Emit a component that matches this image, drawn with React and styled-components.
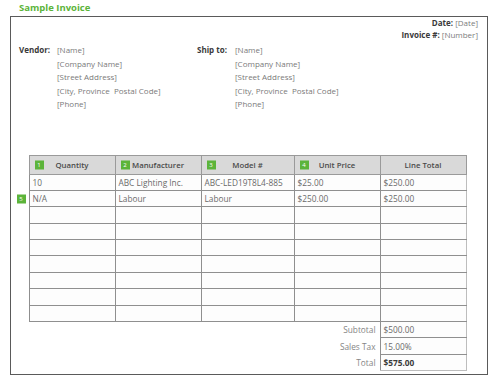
import React from "react";
import styled, { createGlobalStyle } from "styled-components";

const GlobalStyle = createGlobalStyle`
  body {
    margin: 0;
    background: #fff;
    font-family: "Open Sans", "Liberation Sans", sans-serif;
  }
`;

const Page = styled.div`
  width: 500px;
  height: 386px;
  padding-top: 2px;
  box-sizing: border-box;
`;

const Title = styled.h1`
  margin: 0 0 0 19px;
  font-size: 9.5px;
  line-height: 12px;
  font-weight: 700;
  color: #5cb43a;
`;

const Sheet = styled.div`
  margin: 2px 12px 0 10px;
  height: 359px;
  border: 1.5px solid #5a5a5a;
  box-sizing: border-box;
  padding: 1px 9px 0 8px;
  display: flex;
  flex-direction: column;
`;

const MetaBlock = styled.div`
  display: flex;
  flex-direction: column;
  align-items: flex-end;
  gap: 1px;
`;

const MetaLine = styled.div`
  font-size: 8px;
  line-height: 10.5px;
  color: #7d7d7d;
`;

const Label = styled.span`
  font-weight: 700;
  color: #3a3a3a;
`;

const Parties = styled.div`
  display: flex;
  margin-top: 3px;
`;

const Party = styled.div`
  display: grid;
  grid-template-columns: 38px auto;
  width: ${p => p.width}px;
`;

const PartyLabel = styled.div`
  font-size: 8px;
  line-height: 13.5px;
  font-weight: 700;
  color: #3a3a3a;
`;

const PartyLines = styled.div`
  display: flex;
  flex-direction: column;
`;

const PartyLine = styled.div`
  font-size: 8px;
  line-height: 13.5px;
  color: #7a7a7a;
`;

const Table = styled.table`
  margin: 44px 0 0 9.5px;
  border-collapse: collapse;
  width: 437px;
  table-layout: fixed;
  font-size: 8.3px;
  color: #6a6a6a;
`;

const Head = styled.th`
  position: relative;
  height: 18px;
  padding: 0;
  background: #d9d9d9;
  border: 1px solid #9a9a9a;
  font-size: 7.8px;
  font-weight: 600;
  color: #4a4a4a;
  text-align: center;
`;

const Badge = styled.span`
  position: absolute;
  left: ${p => p.left ?? 5}px;
  top: 50%;
  transform: translateY(-50%);
  width: 9px;
  height: 9px;
  background: #5cb43a;
  color: #fff;
  font-size: 6px;
  line-height: 9px;
  font-weight: 400;
  text-align: center;
`;

const Row = styled.tr`
  height: 16.4px;
`;

const Cell = styled.td`
  position: relative;
  padding: 0 0 0 3px;
  border: 1px solid #8f8f8f;
  border-right: ${p => (p.last ? "1.5px solid #bdbdbd" : "1px solid #8f8f8f")};
  border-bottom: ${p => (p.end ? "1.5px solid #bdbdbd" : "1px solid #8f8f8f")};
  background: #fdfdfd;
  white-space: nowrap;
  font-weight: ${p => (p.bold ? 700 : 400)};
  color: ${p => (p.bold ? "#3a3a3a" : "#6a6a6a")};
`;

const SumLabel = styled.td`
  padding: 0 4px 0 0;
  text-align: right;
  color: #858585;
  border: none;
`;

const cols = [86, 86, 93, 86, 86];

const heads = [
  { n: "1", t: "Quantity" },
  { n: "2", t: "Manufacturer" },
  { n: "3", t: "Model #" },
  { n: "4", t: "Unit Price" },
  { n: null, t: "Line Total" },
];

const rows = [
  ["10", "ABC Lighting Inc.", "ABC-LED19T8L4-885", "$25.00", "$250.00"],
  ["N/A", "Labour", "Labour", "$250.00", "$250.00"],
  ...Array.from({ length: 7 }, () => ["", "", "", "", ""]),
];

const totals = [
  ["Subtotal", "$500.00"],
  ["Sales Tax", "15.00%"],
  ["Total", "$575.00", true],
];

export default function App() {
  return (
    <Page>
      <GlobalStyle />
      <Title>Sample Invoice</Title>
      <Sheet>
        <MetaBlock>
          <MetaLine><Label>Date:</Label> [Date]</MetaLine>
          <MetaLine><Label>Invoice #:</Label> [Number]</MetaLine>
        </MetaBlock>
        <Parties>
          <Party width={178}>
            <PartyLabel>Vendor:</PartyLabel>
            <PartyLines>
              <PartyLine>[Name]</PartyLine>
              <PartyLine>[Company Name]</PartyLine>
              <PartyLine>[Street Address]</PartyLine>
              <PartyLine>[City, Province&nbsp;&nbsp;Postal Code]</PartyLine>
              <PartyLine>[Phone]</PartyLine>
            </PartyLines>
          </Party>
          <Party width={200}>
            <PartyLabel>Ship to:</PartyLabel>
            <PartyLines>
              <PartyLine>[Name]</PartyLine>
              <PartyLine>[Company Name]</PartyLine>
              <PartyLine>[Street Address]</PartyLine>
              <PartyLine>[City, Province&nbsp;&nbsp;Postal Code]</PartyLine>
              <PartyLine>[Phone]</PartyLine>
            </PartyLines>
          </Party>
        </Parties>
        <Table>
          <colgroup>
            {cols.map((w, i) => <col key={i} style={{ width: w }} />)}
          </colgroup>
          <thead>
            <tr>
              {heads.map(h => (
                <Head key={h.t}>
                  {h.n && <Badge>{h.n}</Badge>}
                  {h.t}
                </Head>
              ))}
            </tr>
          </thead>
          <tbody>
            {rows.map((r, i) => (
              <Row key={i}>
                {r.map((c, j) => (
                  <Cell key={j} last={j === 4}>
                    {i === 1 && j === 0 && <Badge left={-13}>5</Badge>}
                    {c}
                  </Cell>
                ))}
              </Row>
            ))}
            {totals.map(([l, v, b], i) => (
              <Row key={l}>
                <SumLabel colSpan={4}>{l}</SumLabel>
                <Cell bold={b} last end={i === totals.length - 1}>{v}</Cell>
              </Row>
            ))}
          </tbody>
        </Table>
      </Sheet>
    </Page>
  );
}
